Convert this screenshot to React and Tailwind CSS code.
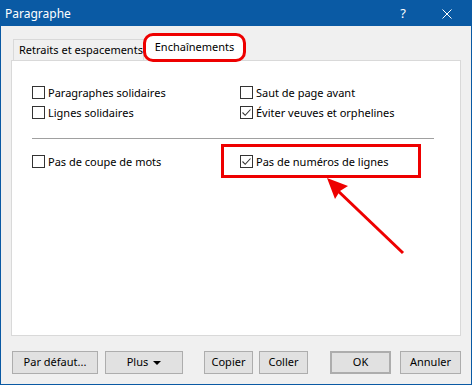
import React from 'react';

const Check = ({ checked }) => (
  <span className="w-[13px] h-[13px] border border-[#333333] bg-white flex items-center justify-center shrink-0">
    {checked && (
      <svg width="11" height="11" viewBox="0 0 11 11">
        <path d="M1.5 5.5 L4.2 8.3 L9.5 2.5" fill="none" stroke="#333333" strokeWidth="1.1" />
      </svg>
    )}
  </span>
);

const Option = ({ label, checked, className = '' }) => (
  <div className={`flex items-center h-[20px] whitespace-nowrap ${className}`}>
    <Check checked={checked} />
    <span className="ml-[3px] leading-none">{label}</span>
  </div>
);

const Btn = ({ children, className = '' }) => (
  <button className={`h-[23px] bg-[#e1e1e1] border border-[#adadad] flex items-center justify-center text-black whitespace-nowrap ${className}`}>
    {children}
  </button>
);

export default function App() {
  return (
    <div
      className="relative w-[472px] h-[385px] bg-[#f0f0f0] border border-[#0a5aa4] flex flex-col text-[11px] text-black"
      style={{ fontFamily: '"Noto Sans", "Liberation Sans", sans-serif' }}
    >
      {/* title bar */}
      <div className="h-[25px] bg-[#0a5aa4] flex items-center text-white shrink-0">
        <span className="pl-[4px] text-[12px]">Paragraphe</span>
        <span className="ml-auto text-[13px] mr-[36px]">?</span>
        <svg width="10" height="10" viewBox="0 0 10 10" className="mr-[19px]">
          <path d="M0.5 0.5 L9.5 9.5 M9.5 0.5 L0.5 9.5" stroke="white" strokeWidth="1" />
        </svg>
      </div>

      {/* tabs */}
      <div className="flex items-end pl-[12px] mt-[7px] h-[27px] relative z-10 whitespace-nowrap">
        <div className="h-[21px] border border-b-0 border-[#d9d9d9] bg-[#f0f0f0] flex items-center pl-[5px] w-[131px]">
          Retraits et espacements
        </div>
        <div className="h-[29px] -ml-[1px] -mb-[2px] border-[3px] border-[#ee0000] rounded-[10px] bg-white flex items-center justify-center w-[103px]">
          Enchaînements
        </div>
      </div>

      {/* panel */}
      <div className="mx-[10px] h-[276px] bg-white border border-[#d9d9d9] flex flex-col pl-[20px] pt-[21px]">
        <div className="flex">
          <div className="w-[208px] flex flex-col">
            <Option label="Paragraphes solidaires" />
            <Option label="Lignes solidaires" />
          </div>
          <div className="flex flex-col">
            <Option label="Saut de page avant" />
            <Option label="Éviter veuves et orphelines" checked />
          </div>
        </div>
        <div className="mt-[16px] w-[402px] h-px bg-[#a0a0a0]" />
        <div className="flex items-center mt-[5px]">
          <Option label="Pas de coupe de mots" className="w-[189px]" />
          <div className="w-[200px] h-[34px] border-[3px] border-[#ee0000] flex items-center pl-[16px]">
            <Option label="Pas de numéros de lignes" checked />
          </div>
        </div>
      </div>

      {/* buttons */}
      <div className="flex items-center pl-[11px] mt-[15px]">
        <Btn className="w-[86px]">Par défaut...</Btn>
        <Btn className="w-[78px] ml-[7px]">
          Plus
          <svg width="8" height="5" viewBox="0 0 8 5" className="ml-[5px] mt-[2px]">
            <path d="M0 0 L8 0 L4 4 Z" fill="#000" />
          </svg>
        </Btn>
        <Btn className="w-[49px] ml-[21px]">Copier</Btn>
        <Btn className="w-[49px] ml-[6px]">Coller</Btn>
        <Btn className="w-[61px] ml-[22px] border-2 border-[#0078d7]">OK</Btn>
        <Btn className="w-[61px] ml-[9px]">Annuler</Btn>
      </div>

      {/* annotation arrow */}
      <svg className="absolute left-[-1px] top-[-1px] pointer-events-none" width="472" height="385" viewBox="0 0 472 385">
        <line x1="403" y1="253" x2="336" y2="189" stroke="#ee0000" strokeWidth="3" />
        <polygon points="327,178 348,186 340,191 335,199" fill="#ee0000" />
      </svg>
    </div>
  );
}
